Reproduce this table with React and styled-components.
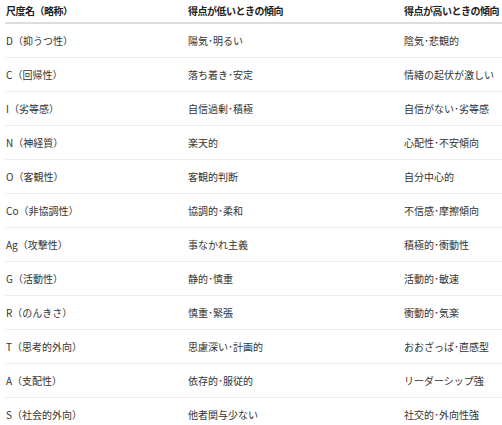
import React from 'react';
import styled, { createGlobalStyle } from 'styled-components';

const GlobalStyle = createGlobalStyle`
  html, body {
    margin: 0;
    padding: 0;
    background: #fff;
  }
  body {
    font-family: "Noto Sans CJK JP", "Noto Sans", sans-serif;
  }
`;

const Table = styled.table`
  margin-left: 5px;
  width: 497px;
  border-collapse: collapse;
  table-layout: fixed;
  font-size: 10px;
  color: #333;
`;

const HeadCell = styled.th`
  height: 22px;
  padding: 0 0 0 1px;
  text-align: left;
  font-weight: 600;
  font-size: 10px;
  letter-spacing: -0.5px;
  color: #222;
  white-space: nowrap;
  border-bottom: 2px solid #ddd;
  vertical-align: middle;
  line-height: 14px;
`;

const Row = styled.tr`
  border-bottom: 1px solid #eee;
`;

const Cell = styled.td`
  height: 33px;
  padding: 0 0 0 1px;
  vertical-align: middle;
  white-space: nowrap;
  line-height: 14px;
`;

const rows = [
  ['D（抑うつ性）', '陽気･明るい', '陰気･悲観的'],
  ['C（回帰性）', '落ち着き･安定', '情緒の起伏が激しい'],
  ['I（劣等感）', '自信過剰･積極', '自信がない･劣等感'],
  ['N（神経質）', '楽天的', '心配性･不安傾向'],
  ['O（客観性）', '客観的判断', '自分中心的'],
  ['Co（非協調性）', '協調的･柔和', '不信感･摩擦傾向'],
  ['Ag（攻撃性）', '事なかれ主義', '積極的･衝動性'],
  ['G（活動性）', '静的･慎重', '活動的･敏速'],
  ['R（のんきさ）', '慎重･緊張', '衝動的･気楽'],
  ['T（思考的外向）', '思慮深い･計画的', 'おおざっぱ･直感型'],
  ['A（支配性）', '依存的･服従的', 'リーダーシップ強'],
  ['S（社会的外向）', '他者関与少ない', '社交的･外向性強'],
];

export default function App() {
  return (
    <>
      <GlobalStyle />
      <Table>
        <colgroup>
          <col style={{ width: 182 }} />
          <col style={{ width: 216 }} />
          <col />
        </colgroup>
        <thead>
          <tr>
            <HeadCell>尺度名（略称）</HeadCell>
            <HeadCell>得点が低いときの傾向</HeadCell>
            <HeadCell>得点が高いときの傾向</HeadCell>
          </tr>
        </thead>
        <tbody>
          {rows.map((r) => (
            <Row key={r[0]}>
              <Cell>{r[0]}</Cell>
              <Cell>{r[1]}</Cell>
              <Cell>{r[2]}</Cell>
            </Row>
          ))}
        </tbody>
      </Table>
    </>
  );
}
